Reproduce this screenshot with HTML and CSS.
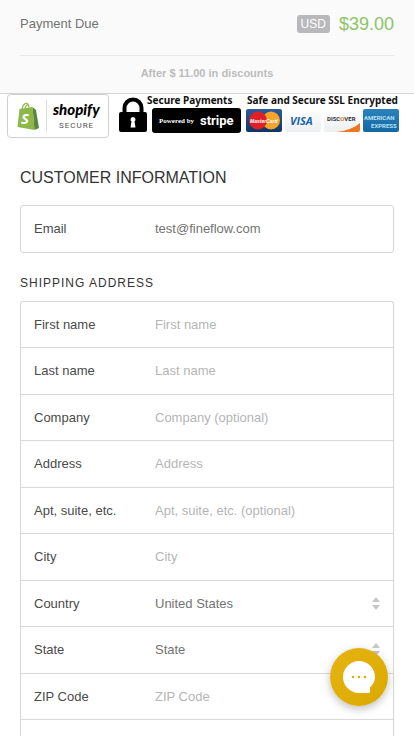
FILE: index.html
```html
<!DOCTYPE html>
<html lang="en">

<head>
    <meta charset="UTF-8">
    <meta name="viewport" content="width=device-width, initial-scale=1.0">
    <title>Checkout</title>
    <link rel="stylesheet" href="styles.css">
</head>

<body>
    <header class="summary">
        <div class="due">
            <span class="due-label">Payment Due</span>
            <span class="currency">USD</span>
            <span class="price">$39.00</span>
        </div>
        <p class="discount">After $ 11.00 in discounts</p>
    </header>

    <svg class="badges" viewBox="0 0 414 46" role="img" aria-label="Secure payments">
        <defs>
            <linearGradient id="blue" x1="0" y1="0" x2="0" y2="1">
                <stop offset="0" stop-color="#2d5c9b" />
                <stop offset="1" stop-color="#123465" />
            </linearGradient>
            <linearGradient id="amex" x1="0" y1="0" x2="0" y2="1">
                <stop offset="0" stop-color="#2a82bd" />
                <stop offset="1" stop-color="#15689f" />
            </linearGradient>
            <linearGradient id="card" x1="0" y1="0" x2="0" y2="1">
                <stop offset="0" stop-color="#ffffff" />
                <stop offset="1" stop-color="#eceef0" />
            </linearGradient>
        </defs>

        <!-- shopify -->
        <rect x="7.5" y="0.5" width="101" height="43" rx="3" fill="#fff" stroke="#cfcfcf" />
        <path d="M46.500 6v31" stroke="#d9d9d9" />
        <path d="M19.500 15l13-2 2 23-17-3z" fill="#8db849" />
        <path d="M32.500 13l3.500 3 3 18-4.500 2z" fill="#5a863e" />
        <path d="M22 15c1-4 3-6 5-5.500s2 2 2 4M25 14c1-3 3-4 4-3" fill="none" stroke="#8db849" stroke-width="1.200" />
        <text class="bag-s" x="21" y="30">S</text>
        <text class="shopify" x="53" y="21">shopify</text>
        <text class="secure" x="59" y="34">SECURE</text>

        <!-- padlock -->
        <path d="M124.500 20v-6a8.500 8.500 0 0 1 17 0v6" fill="none" stroke="#000" stroke-width="4" />
        <rect x="119" y="18" width="28" height="20" rx="2" />
        <path d="M133 23a2.500 2.500 0 0 1 1.500 4.500l1 6h-5l1-6a2.500 2.500 0 0 1 1.500-4.500z" fill="#fff" />

        <text class="caption" x="147" y="10">Secure Payments</text>
        <text class="caption" x="247" y="10">Safe and Secure SSL Encrypted</text>

        <!-- stripe -->
        <rect x="152" y="14" width="89" height="25" rx="3" />
        <text class="powered" x="159" y="29">Powered by</text>
        <text class="stripe" x="200" y="31">stripe</text>

        <!-- cards -->
        <rect x="246" y="15" width="36" height="23" rx="2" fill="url(#blue)" />
        <circle cx="271" cy="26.500" r="9" fill="#f4a42a" />
        <circle cx="258" cy="26.500" r="9" fill="#e01f26" />
        <text class="mastercard" x="250" y="29">MasterCard</text>

        <rect x="285" y="15" width="36" height="23" rx="2" fill="url(#card)" />
        <text class="visa" x="290" y="31">VISA</text>

        <rect x="324" y="15" width="36" height="23" rx="2" fill="url(#card)" />
        <path d="M336 38c10-1 18-4 24-9v7a2 2 0 0 1-2 2z" fill="#ee7623" />
        <text class="discover" x="327" y="27">DISC<tspan fill="#ee7623">O</tspan>VER</text>

        <rect x="363" y="15" width="36" height="23" rx="2" fill="url(#amex)" />
        <text class="amex" x="364" y="26">AMERICAN</text>
        <text class="amex" x="371" y="34">EXPRESS</text>
    </svg>

    <form class="checkout">
        <h2>CUSTOMER INFORMATION</h2>
        <div class="box">
            <div class="row">
                <label for="email">Email</label>
                <input id="email" type="email" value="test@fineflow.com">
            </div>
        </div>

        <h3>SHIPPING ADDRESS</h3>
        <div class="box address">
            <div class="row">
                <label for="first">First name</label>
                <input id="first" type="text" placeholder="First name">
            </div>
            <div class="row">
                <label for="last">Last name</label>
                <input id="last" type="text" placeholder="Last name">
            </div>
            <div class="row">
                <label for="company">Company</label>
                <input id="company" type="text" placeholder="Company (optional)">
            </div>
            <div class="row">
                <label for="address">Address</label>
                <input id="address" type="text" placeholder="Address">
            </div>
            <div class="row">
                <label for="apt">Apt, suite, etc.</label>
                <input id="apt" type="text" placeholder="Apt, suite, etc. (optional)">
            </div>
            <div class="row">
                <label for="city">City</label>
                <input id="city" type="text" placeholder="City">
            </div>
            <div class="row">
                <label for="country">Country</label>
                <select id="country">
                    <option>United States</option>
                </select>
                <svg class="arrows" viewBox="0 0 8 14" aria-hidden="true">
                    <path d="M0 5l4-5 4 5zM0 8h8l-4 5z" />
                </svg>
            </div>
            <div class="row">
                <label for="state">State</label>
                <select id="state">
                    <option>State</option>
                </select>
                <svg class="arrows" viewBox="0 0 8 14" aria-hidden="true">
                    <path d="M0 5l4-5 4 5zM0 8h8l-4 5z" />
                </svg>
            </div>
            <div class="row">
                <label for="zip">ZIP Code</label>
                <input id="zip" type="text" placeholder="ZIP Code">
            </div>
        </div>
    </form>

    <button class="chat" type="button" aria-label="Chat">
        <svg viewBox="0 0 32 32" aria-hidden="true">
            <path d="M16 0a16 16 0 0 1 16 16c0 4-2 8-5 10.500V30.500q0 1.500-1.500 1.500H16A16 16 0 0 1 16 0z" fill="#fff" />
            <circle cx="10" cy="16" r="1.300" />
            <circle cx="16" cy="16" r="1.300" />
            <circle cx="22" cy="16" r="1.300" />
        </svg>
    </button>
</body>

</html>
```
FILE: styles.css
```css
* {
    box-sizing: border-box;
}

body {
    margin: 0;
    background: #fff;
    color: #4a4a4a;
    font: 13px/18px "Liberation Sans", Arial, sans-serif;
}

h2,
h3,
p {
    margin: 0;
    font-weight: normal;
}

.summary {
    padding: 0 20px;
    background: #fafafa;
    border-bottom: 1px solid #d4d4d4;
}

.due {
    display: flex;
    align-items: center;
    height: 56px;
    padding-bottom: 8px;
    border-bottom: 1px solid #e8e8e8;
}

.due-label {
    flex: 1;
    color: #737373;
}

.currency {
    padding: 0 4px;
    margin-right: 9px;
    border-radius: 3px;
    background: #b9b9bb;
    color: #fff;
    font-size: 12px;
}

.price {
    color: #8cc466;
    font-size: 18px;
}

.discount {
    padding: 8px 0 11px;
    color: #bcbcbe;
    font-size: 11px;
    font-weight: bold;
    text-align: center;
}

.badges {
    display: block;
    width: 100%;
}

.bag-s {
    fill: #fff;
    font: italic bold 15px "Open Sans", sans-serif;
}

.shopify {
    font: italic 900 15px Lato, sans-serif;
}

.secure {
    fill: #555;
    font: 8px Roboto, sans-serif;
    letter-spacing: 1px;
}

.caption {
    fill: #111;
    font: bold 10px "Noto Sans", sans-serif;
}

.powered {
    fill: #fff;
    font: bold 7px "Liberation Serif", serif;
}

.stripe {
    fill: #fff;
    font: bold 13px Roboto, sans-serif;
}

.mastercard {
    fill: #fff;
    font: italic bold 5px "Liberation Sans", sans-serif;
}

.visa {
    fill: #1b65a8;
    font: italic bold 11px "Open Sans", sans-serif;
}

.discover {
    fill: #333;
    font: bold 6px Roboto, sans-serif;
}

.amex {
    fill: #b9e0f6;
    font: bold 6px Roboto, sans-serif;
}

.checkout {
    padding: 27px 20px 0;
}

h2 {
    margin-bottom: 16px;
    color: #333;
    font-size: 16px;
    line-height: 22px;
}

h3 {
    margin: 21px 0 9px;
    color: #333;
    font-size: 12px;
    line-height: 18px;
    letter-spacing: 1px;
}

.box {
    border: 1px solid #d6d6d6;
    border-radius: 3px;
}

.row {
    display: flex;
    align-items: center;
    height: 46px;
    padding: 0 13px;
}

.address {
    padding-bottom: 17px;
    border-bottom: none;
    border-radius: 3px 3px 0 0;
}

.address .row {
    border-bottom: 1px solid #d9d9d9;
}

.address .row:nth-child(even) {
    height: 47px;
}

label {
    width: 121px;
}

input,
select {
    flex: 1;
    min-width: 0;
    padding: 0;
    border: none;
    outline: none;
    appearance: none;
    background: none;
    color: #737373;
    font: inherit;
}

input::placeholder {
    color: #b5b5b5;
    opacity: 1;
}

.arrows {
    width: 8px;
    height: 14px;
    fill: #c6c6c6;
}

.chat {
    position: fixed;
    right: 26px;
    bottom: 30px;
    display: flex;
    align-items: center;
    justify-content: center;
    width: 58px;
    height: 58px;
    padding: 0;
    border: none;
    border-radius: 50%;
    background: linear-gradient(135deg, #e6b411, #d9a900);
    box-shadow: 0 3px 8px rgba(0, 0, 0, 0.25);
}

.chat svg {
    width: 32px;
    height: 32px;
    fill: #deae0b;
}
```
